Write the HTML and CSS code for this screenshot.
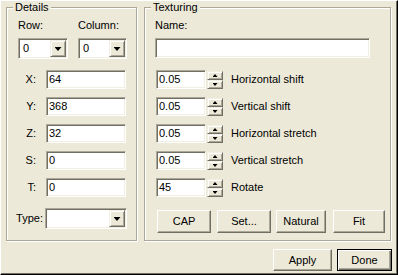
FILE: index.html
```html
<!DOCTYPE html>
<html lang="en">
<head>
    <meta charset="UTF-8">
    <title>Surface Inspector</title>
    <link rel="stylesheet" href="styles.css">
</head>
<body>

<div class="dialog">
    <div class="groups">
        <fieldset class="group details">
            <legend>Details</legend>
            <div class="details-body">
                <div class="pickers">
                    <div class="picker">
                        <div class="picker-label">Row:</div>
                        <div class="combo"><span class="combo-text">0</span><span class="drop"></span></div>
                    </div>
                    <div class="picker">
                        <div class="picker-label">Column:</div>
                        <div class="combo"><span class="combo-text">0</span><span class="drop"></span></div>
                    </div>
                </div>

                <div class="coords">
                    <span class="coord-label">X:</span><div class="field">64</div>
                    <span class="coord-label">Y:</span><div class="field">368</div>
                    <span class="coord-label">Z:</span><div class="field">32</div>
                    <span class="coord-label">S:</span><div class="field">0</div>
                    <span class="coord-label">T:</span><div class="field">0</div>
                </div>

                <div class="type-row">
                    <span class="type-label">Type:</span>
                    <div class="combo"><span class="combo-text"></span><span class="drop"></span></div>
                </div>
            </div>
        </fieldset>

        <fieldset class="group texturing">
            <legend>Texturing</legend>
            <div class="texturing-body">
                <div class="name-label">Name:</div>
                <div class="field name-field"></div>

                <div class="shifts">
                    <div class="shift">
                        <div class="field spin-field">0.05</div>
                        <div class="spin-buttons"><span class="spin up"></span><span class="spin down"></span></div>
                        <span class="shift-label">Horizontal shift</span>
                    </div>
                    <div class="shift">
                        <div class="field spin-field">0.05</div>
                        <div class="spin-buttons"><span class="spin up"></span><span class="spin down"></span></div>
                        <span class="shift-label">Vertical shift</span>
                    </div>
                    <div class="shift">
                        <div class="field spin-field">0.05</div>
                        <div class="spin-buttons"><span class="spin up"></span><span class="spin down"></span></div>
                        <span class="shift-label">Horizontal stretch</span>
                    </div>
                    <div class="shift">
                        <div class="field spin-field">0.05</div>
                        <div class="spin-buttons"><span class="spin up"></span><span class="spin down"></span></div>
                        <span class="shift-label">Vertical stretch</span>
                    </div>
                    <div class="shift">
                        <div class="field spin-field">45</div>
                        <div class="spin-buttons"><span class="spin up"></span><span class="spin down"></span></div>
                        <span class="shift-label">Rotate</span>
                    </div>
                </div>

                <div class="tex-buttons">
                    <button class="button btn-cap">CAP</button>
                    <button class="button btn-set">Set...</button>
                    <button class="button btn-natural">Natural</button>
                    <button class="button btn-fit">Fit</button>
                </div>
            </div>
        </fieldset>
    </div>

    <div class="actions">
        <button class="button btn-apply">Apply</button>
        <button class="button btn-done default">Done</button>
    </div>
</div>

</body>
</html>
```

FILE: styles.css
```css
body {
    margin: 0;
    background-color: #ECE9D8;
    font-family: "Liberation Sans", Arial, sans-serif;
    font-size: 11px;
    line-height: 13px;
    color: #000;
}
.dialog {
    box-sizing: border-box;
    width: 398px;
    height: 275px;
    border-top: 1px solid #fff;
    border-left: 1px solid #fff;
    border-right: 1px solid #000;
    border-bottom: 1px solid #000;
    box-shadow: inset -1px -1px 0 #716F64;
    padding-left: 5px;
}
.groups {
    display: flex;
    gap: 7px;
    height: 240px;
}

/* etched group boxes */
.group {
    box-sizing: border-box;
    height: 240px;
    min-width: 0;
    margin: 0;
    padding: 0;
    border: 1px solid #ACA899;
    box-shadow: inset 1px 1px 0 #fff, 1px 1px 0 #fff;
}
.group legend {
    margin-left: 6px;
    padding: 0 2px;
    background-color: #ECE9D8;
    line-height: 13px;
}
.details {
    width: 131px;
}
.texturing {
    width: 247px;
}

/* sunken edit box */
.field {
    box-sizing: border-box;
    height: 19px;
    padding: 2px 1px 0 2px;
    background: #fff;
    border: 1px solid;
    border-color: #ACA899 #fff #fff #ACA899;
    box-shadow: inset 1px 1px 0 #716F64, inset -1px -1px 0 #F1EFE2;
    white-space: nowrap;
}

/* drop down combo */
.combo {
    box-sizing: border-box;
    display: flex;
    align-items: center;
    height: 21px;
    padding: 1px;
    background: #fff;
    border: 1px solid;
    border-color: #ACA899 #fff #fff #ACA899;
    box-shadow: inset 1px 1px 0 #716F64, inset -1px -1px 0 #F1EFE2;
}
.combo-text {
    flex: 1;
    padding-left: 3px;
}
.drop {
    box-sizing: border-box;
    display: flex;
    align-items: center;
    justify-content: center;
    align-self: stretch;
    width: 16px;
    background-color: #ECE9D8;
    border: 1px solid;
    border-color: #F1EFE2 #716F64 #716F64 #F1EFE2;
    box-shadow: inset 1px 1px 0 #fff, inset -1px -1px 0 #ACA899;
}
.drop::after {
    content: "";
    width: 7px;
    height: 4px;
    margin-top: 1px;
    background: #000;
    clip-path: polygon(0 0, 100% 0, 50% 100%);
}

/* Details group */
.details-body {
    padding: 5px 10px 0 11px;
}
.pickers {
    display: grid;
    grid-template-columns: 50px 49px;
    column-gap: 10px;
}
.picker-label {
    margin-bottom: 6px;
}
.coords {
    display: grid;
    grid-template-columns: 28px 80px;
    grid-auto-rows: 19px;
    row-gap: 8px;
    margin-top: 11px;
    align-items: center;
}
.coord-label {
    text-align: right;
    padding-right: 10px;
}
.type-row {
    display: grid;
    grid-template-columns: 31px 82px;
    align-items: center;
    margin: 11px 0 0 -4px;
}
.type-label {
    text-align: right;
    padding-right: 2px;
}

/* Texturing group */
.texturing-body {
    padding: 5px 0 0 10px;
}
.name-label {
    margin-bottom: 6px;
}
.name-field {
    width: 215px;
    height: 20px;
}
.shifts {
    display: flex;
    flex-direction: column;
    gap: 8px;
    margin-top: 12px;
    padding-left: 1px;
}
.shift {
    display: flex;
    align-items: center;
    height: 19px;
}
.spin-field {
    width: 50px;
}
.spin-buttons {
    display: flex;
    flex-direction: column;
    width: 16px;
    height: 18px;
    margin: 1px 0 0 1px;
}
.spin {
    box-sizing: border-box;
    flex: 1;
    display: flex;
    align-items: center;
    justify-content: center;
    background-color: #ECE9D8;
    border: 1px solid;
    border-color: #F1EFE2 #716F64 #716F64 #F1EFE2;
    box-shadow: inset 1px 1px 0 #fff, inset -1px -1px 0 #ACA899;
}
.spin::after {
    content: "";
    width: 5px;
    height: 3px;
    background: #000;
}
.spin.up::after {
    clip-path: polygon(50% 0, 100% 100%, 0 100%);
}
.spin.down::after {
    clip-path: polygon(0 0, 100% 0, 50% 100%);
}
.shift-label {
    margin-left: 8px;
}
.tex-buttons {
    display: flex;
    margin-top: 13px;
    padding-left: 2px;
}
.btn-cap { width: 54px; }
.btn-set { width: 54px; margin-left: 6px; }
.btn-natural { width: 50px; margin-left: 5px; }
.btn-fit { width: 52px; margin-left: 7px; }

/* push buttons */
.button {
    box-sizing: border-box;
    height: 23px;
    padding: 0;
    font: inherit;
    color: #000;
    background-color: #ECE9D8;
    border: 1px solid;
    border-color: #fff #716F64 #716F64 #fff;
    border-radius: 0;
    box-shadow: inset -1px -1px 0 #ACA899;
}
.button.default {
    border-color: #000;
    box-shadow: inset 1px 1px 0 #fff, inset -1px -1px 0 #716F64, inset -2px -2px 0 #ACA899;
}
.actions {
    display: flex;
    justify-content: flex-end;
    gap: 5px;
    margin-top: 8px;
    padding-right: 5px;
}
.actions .button {
    height: 22px;
}
.btn-apply { width: 59px; }
.btn-done { width: 55px; }
```
